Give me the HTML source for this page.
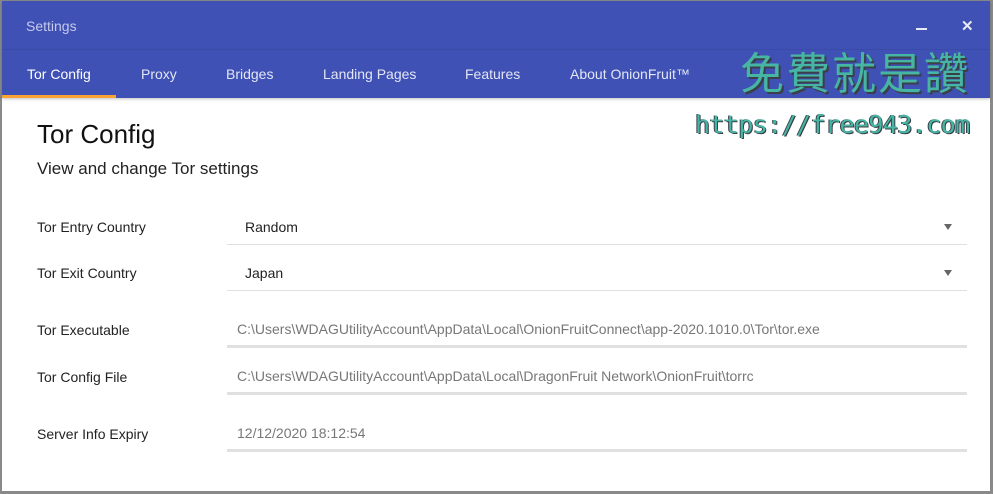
<!DOCTYPE html>
<html><head><meta charset="utf-8"><style>
*{margin:0;padding:0;box-sizing:border-box}
html,body{width:993px;height:494px;overflow:hidden;background:#fff;font-family:"Liberation Sans",Arial,sans-serif}
.win{position:absolute;left:0;top:0;width:993px;height:494px;border:2px solid #8a8a8a;border-top-width:1px;border-right-width:3px;border-bottom-width:3px}
.hdr{position:absolute;left:0;top:0;width:988px;height:97px;background:#3f51b5;box-shadow:0 1px 3px rgba(0,0,0,.25)}
.sep{position:absolute;left:0;top:48px;width:988px;height:1px;background:#3a4aa8}
.title{position:absolute;left:24px;top:17px;color:#c5cae9;font-size:14px}
.min{position:absolute;left:914px;top:27px;width:11px;height:2px;background:#e8eaf6}
.x{position:absolute;left:959px;top:16px;color:#e8eaf6;font-size:15px;font-weight:bold}
.tab{position:absolute;top:65px;color:#e3e6f5;font-size:14px}
.ul{position:absolute;left:0;top:94px;width:114px;height:3px;background:#f9a334}
.wm1{position:absolute;left:738px;top:40px;font-family:"Noto Sans CJK TC",sans-serif;font-size:44px;color:#47b5a4;letter-spacing:2px;text-shadow:2px 2px 0 #3a3f48;line-height:58px}
.wm2{position:absolute;left:693px;top:109px;font-family:"DejaVu Sans Mono",monospace;font-size:25px;color:#47b5a4;text-shadow:1px 1px 0 #3a3f48,-1px 0 0 #3a3f48;letter-spacing:-0.6px}
h1{position:absolute;left:35px;top:118px;font-size:26px;font-weight:normal;color:#111}
h2{position:absolute;left:35px;top:158px;font-size:17px;font-weight:normal;color:#222}
.lbl{position:absolute;left:35px;font-size:14px;color:#222}
.val{position:absolute;left:243px;font-size:14px;color:#222}
.path{position:absolute;left:235px;font-size:14px;color:#777}
.line1{position:absolute;left:225px;width:740px;height:1px;background:#e0e0e0}
.line3{position:absolute;left:225px;width:740px;height:3px;background:#e0e0e0}
.arr{position:absolute;left:942px;width:0;height:0;border-left:4px solid transparent;border-right:4px solid transparent;border-top:6px solid #666}
</style></head><body>
<div class="win">
<div class="hdr">
<div class="sep"></div>
<div class="title">Settings</div>
<div class="min"></div>
<div class="x">✕</div>
<div class="tab" style="left:25px;color:#fff">Tor Config</div>
<div class="tab" style="left:139px">Proxy</div>
<div class="tab" style="left:224px">Bridges</div>
<div class="tab" style="left:321px">Landing Pages</div>
<div class="tab" style="left:463px">Features</div>
<div class="tab" style="left:568px">About OnionFruit™</div>
<div class="ul"></div>
<div class="wm1">免費就是讚</div>
</div>
<div class="wm2">https://free943.com</div>
<h1>Tor Config</h1>
<h2>View and change Tor settings</h2>
<div class="lbl" style="top:218px">Tor Entry Country</div>
<div class="val" style="top:218px">Random</div>
<div class="arr" style="top:223px"></div>
<div class="line1" style="top:243px"></div>
<div class="lbl" style="top:264px">Tor Exit Country</div>
<div class="val" style="top:264px">Japan</div>
<div class="arr" style="top:269px"></div>
<div class="line1" style="top:289px"></div>
<div class="lbl" style="top:321px">Tor Executable</div>
<div class="path" style="top:320px">C:\Users\WDAGUtilityAccount\AppData\Local\OnionFruitConnect\app-2020.1010.0\Tor\tor.exe</div>
<div class="line3" style="top:344px"></div>
<div class="lbl" style="top:368px">Tor Config File</div>
<div class="path" style="top:367px">C:\Users\WDAGUtilityAccount\AppData\Local\DragonFruit Network\OnionFruit\torrc</div>
<div class="line3" style="top:391px"></div>
<div class="lbl" style="top:425px">Server Info Expiry</div>
<div class="path" style="top:424px">12/12/2020 18:12:54</div>
<div class="line3" style="top:448px"></div>
</div>
</body></html>
